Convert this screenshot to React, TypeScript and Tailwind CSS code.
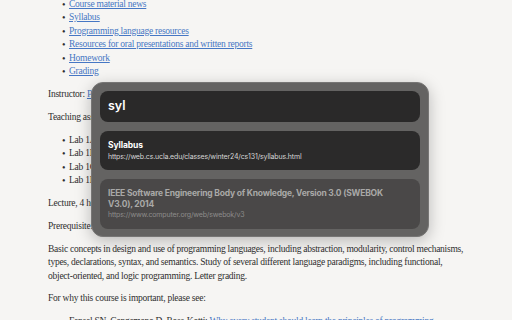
import React from "react";

const serif = { fontFamily: '"Liberation Serif", "Times New Roman", serif' };
const sans = { fontFamily: 'Inter, "Noto Sans", sans-serif' };

function Link({ children }: { children: React.ReactNode }) {
  return <a className="text-[#4677c4] underline underline-offset-[1px] decoration-[0.5px]">{children}</a>;
}

function Bullets({ items }: { items: React.ReactNode[] }) {
  return (
    <ul className="pl-[21px]">
      {items.map((item, i) => (
        <li key={i} className="flex items-center whitespace-nowrap">
          <span className="w-[7px] -ml-[7px] text-[10px]">•</span>
          <span>{item}</span>
        </li>
      ))}
    </ul>
  );
}

export default function App() {
  return (
    <div className="relative w-[512px] h-[320px] overflow-hidden bg-[#f6f5f3]">
      {/* Page content, scrolled */}
      <div
        className="flex flex-col gap-[9.5px] pl-[48px] -mt-[2px] text-[9.5px] leading-[13.4px] tracking-[-0.25px] text-[#2e2e2e]"
        style={serif}
      >
        <Bullets
          items={[
            <Link>Course material news</Link>,
            <Link>Syllabus</Link>,
            <Link>Programming language resources</Link>,
            <Link>Resources for oral presentations and written reports</Link>,
            <Link>Homework</Link>,
            <Link>Grading</Link>,
          ]}
        />
        <p className="whitespace-nowrap">
          Instructor: <Link>Paul Eggert</Link>
        </p>
        <p className="whitespace-nowrap">Teaching assistants:</p>
        <Bullets
          items={[
            "Lab 1A: Kimberly Lee",
            "Lab 1B: Kimberly Lee",
            "Lab 1C: Hoang Le",
            "Lab 1D: Hoang Le",
          ]}
        />
        <p className="whitespace-nowrap">Lecture, 4 hours; discussion, 2 hours; outside study, 6 hours.</p>
        <p className="whitespace-nowrap">Prerequisite: course 35L.</p>
        <div className="whitespace-nowrap">
          <div>Basic concepts in design and use of programming languages, including abstraction, modularity, control mechanisms,</div>
          <div>types, declarations, syntax, and semantics. Study of several different language paradigms, including functional,</div>
          <div>object-oriented, and logic programming. Letter grading.</div>
        </div>
        <p className="whitespace-nowrap">For why this course is important, please see:</p>
        <Bullets
          items={[
            <>
              Fensel SN, Cangemano D, Ross-Kotti: <Link>Why every student should learn the principles of programming</Link>
            </>,
          ]}
        />
      </div>

      {/* Search overlay */}
      <div
        className="absolute left-[91px] top-[82px] w-[338px] h-[155px] rounded-[12px] bg-[#646362] border border-[#777675] p-[8px] flex flex-col gap-[9px] shadow-[0_4px_16px_rgba(0,0,0,0.25)]"
        style={sans}
      >
        <div className="h-[31px] shrink-0 rounded-[8px] bg-[#2a2929] flex items-center px-[8px]">
          <span className="text-white text-[12.5px] font-semibold leading-none">syl</span>
        </div>

        <div className="h-[39px] shrink-0 rounded-[8px] bg-[#2b2a2a] flex flex-col justify-center px-[8px]">
          <div className="text-white text-[8.5px] font-bold leading-[11px] tracking-[-0.1px]">Syllabus</div>
          <div className="text-[#d6d6d6] text-[7px] leading-[10px] tracking-[-0.15px] mt-[1px]">
            https://web.cs.ucla.edu/classes/winter24/cs131/syllabus.html
          </div>
        </div>

        <div className="h-[50px] shrink-0 rounded-[8px] bg-[#4a4848] flex flex-col justify-center px-[8px]">
          <div className="text-[#a9a8a7] text-[8.5px] font-bold leading-[10.5px] tracking-[-0.2px] w-[295px]">
            IEEE Software Engineering Body of Knowledge, Version 3.0 (SWEBOK V3.0), 2014
          </div>
          <div className="text-[#8d8c8b] text-[7px] leading-[10px] tracking-[-0.15px] mt-[1px]">
            https://www.computer.org/web/swebok/v3
          </div>
        </div>
      </div>
    </div>
  );
}
